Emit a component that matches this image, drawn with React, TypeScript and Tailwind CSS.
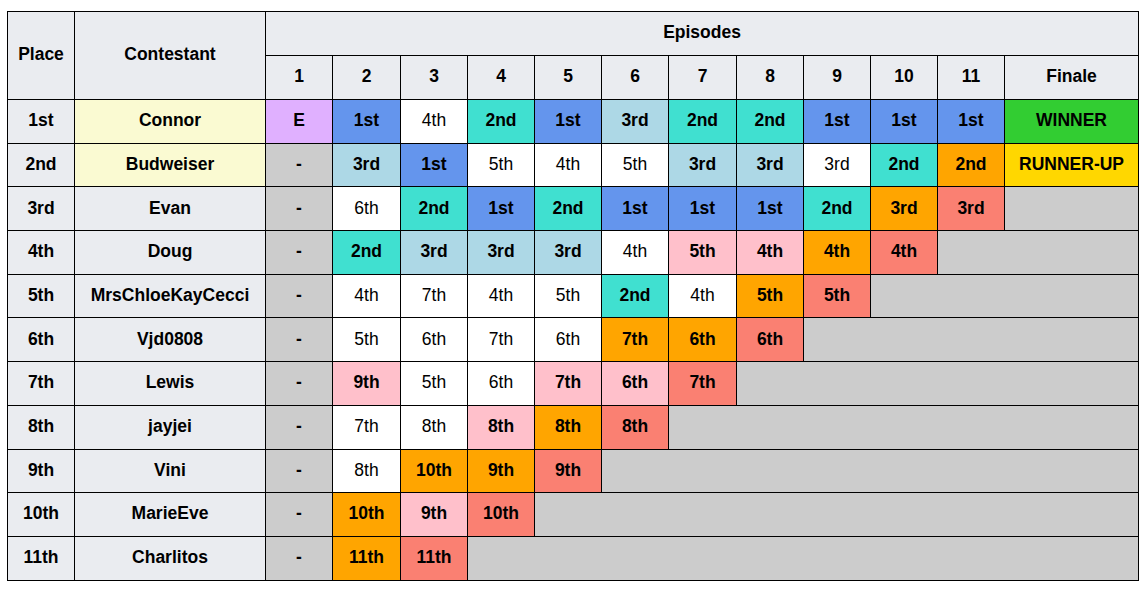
import React from "react";

type Cell = { t: string; c: string; b?: boolean };

const BG: Record<string, string> = {
  E: "bg-[#e0b0ff]",
  B: "bg-[#6495ed]",
  T: "bg-[#40e0d0]",
  L: "bg-[#add8e6]",
  W: "bg-white",
  O: "bg-[#ffa500]",
  S: "bg-[#fa8072]",
  P: "bg-[#ffc0cb]",
  G: "bg-[#cccccc]",
  WIN: "bg-[#32cd32]",
  RUN: "bg-[#ffd700]",
};

// compact row spec: "text:colour"
const ROWS: { place: string; name: string; finalist?: boolean; cells: string[] }[] = [
  {
    place: "1st",
    name: "Connor",
    finalist: true,
    cells: ["E:E", "1st:B", "4th:W", "2nd:T", "1st:B", "3rd:L", "2nd:T", "2nd:T", "1st:B", "1st:B", "1st:B", "WINNER:WIN"],
  },
  {
    place: "2nd",
    name: "Budweiser",
    finalist: true,
    cells: ["-:G", "3rd:L", "1st:B", "5th:W", "4th:W", "5th:W", "3rd:L", "3rd:L", "3rd:W", "2nd:T", "2nd:O", "RUNNER-UP:RUN"],
  },
  { place: "3rd", name: "Evan", cells: ["-:G", "6th:W", "2nd:T", "1st:B", "2nd:T", "1st:B", "1st:B", "1st:B", "2nd:T", "3rd:O", "3rd:S"] },
  { place: "4th", name: "Doug", cells: ["-:G", "2nd:T", "3rd:L", "3rd:L", "3rd:L", "4th:W", "5th:P", "4th:P", "4th:O", "4th:S"] },
  { place: "5th", name: "MrsChloeKayCecci", cells: ["-:G", "4th:W", "7th:W", "4th:W", "5th:W", "2nd:T", "4th:W", "5th:O", "5th:S"] },
  { place: "6th", name: "Vjd0808", cells: ["-:G", "5th:W", "6th:W", "7th:W", "6th:W", "7th:O", "6th:O", "6th:S"] },
  { place: "7th", name: "Lewis", cells: ["-:G", "9th:P", "5th:W", "6th:W", "7th:P", "6th:P", "7th:S"] },
  { place: "8th", name: "jayjei", cells: ["-:G", "7th:W", "8th:W", "8th:P", "8th:O", "8th:S"] },
  { place: "9th", name: "Vini", cells: ["-:G", "8th:W", "10th:O", "9th:O", "9th:S"] },
  { place: "10th", name: "MarieEve", cells: ["-:G", "10th:O", "9th:P", "10th:S"] },
  { place: "11th", name: "Charlitos", cells: ["-:G", "11th:O", "11th:S"] },
];

const COLS = [67, 191, 67, 68, 67, 67, 67, 67, 68, 67, 67, 67, 67, 134];

const TD = "border border-black text-center align-middle p-0 pb-[2px]";
const HEAD = "bg-[#eaecf0] font-bold";

export default function App() {
  return (
    <div
      className="w-[1146px] h-[590px] bg-white pt-[11px] pl-[7px] text-black text-[17.5px]"
      style={{ fontFamily: '"Liberation Sans", Arial, sans-serif' }}
    >
      <table className="table-fixed border-collapse w-[1131px]">
        <colgroup>
          {COLS.map((w, i) => (
            <col key={i} style={{ width: w }} />
          ))}
        </colgroup>
        <thead>
          <tr>
            <th rowSpan={2} className={`${TD} ${HEAD}`}>Place</th>
            <th rowSpan={2} className={`${TD} ${HEAD}`}>Contestant</th>
            <th colSpan={12} className={`${TD} ${HEAD} h-[44px]`}>Episodes</th>
          </tr>
          <tr>
            {["1", "2", "3", "4", "5", "6", "7", "8", "9", "10", "11", "Finale"].map((e) => (
              <th key={e} className={`${TD} ${HEAD} h-[44px]`}>{e}</th>
            ))}
          </tr>
        </thead>
        <tbody>
          {ROWS.map((r) => {
            const cells: Cell[] = r.cells.map((s) => {
              const [t, c] = s.split(":");
              return { t, c, b: c !== "W" };
            });
            const rest = 12 - cells.length;
            return (
              <tr key={r.place}>
                <td className={`${TD} ${HEAD} h-[43.7px]`}>{r.place}</td>
                <td className={`${TD} font-bold ${r.finalist ? "bg-[#fafad2]" : "bg-[#eaecf0]"}`}>{r.name}</td>
                {cells.map((c, i) => (
                  <td key={i} className={`${TD} ${BG[c.c]} ${c.b ? "font-bold" : "font-normal"}`}>
                    {c.t}
                  </td>
                ))}
                {rest > 0 && <td colSpan={rest} className={`${TD} bg-[#cccccc]`} />}
              </tr>
            );
          })}
        </tbody>
      </table>
    </div>
  );
}
